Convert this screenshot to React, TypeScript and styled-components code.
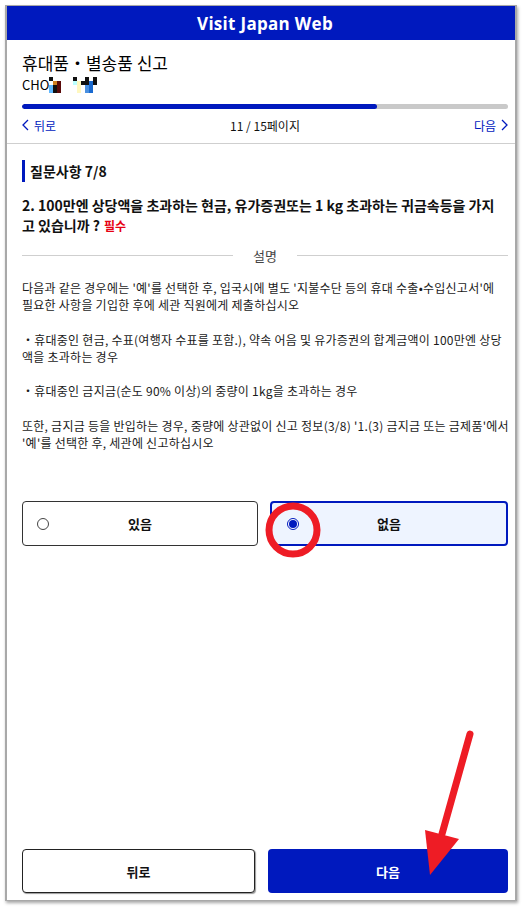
import React from 'react';
import styled, { createGlobalStyle } from 'styled-components';

const BLUE = '#0019be';

const GlobalStyle = createGlobalStyle`
  html, body {
    margin: 0;
    padding: 0;
    background: #ffffff;
  }
  body {
    font-family: "Noto Sans CJK KR", "Noto Sans", sans-serif;
    color: #111;
  }
`;

const Page = styled.div`
  position: relative;
  width: 523px;
  height: 907px;
  padding: 5px 6px 6px 5px;
  box-sizing: border-box;
`;

const Frame = styled.div`
  height: 896px;
  border: 2px solid #a8a8a8;
  border-top-width: 1px;
  border-bottom-width: 1px;
  box-shadow: 1px 2px 3px rgba(0, 0, 0, 0.35);
  display: flex;
  flex-direction: column;
  box-sizing: border-box;
  background: #fff;
`;

const Header = styled.div`
  height: 34px;
  flex-shrink: 0;
  background: ${BLUE};
  color: #fff;
  display: flex;
  align-items: center;
  justify-content: center;
  padding-left: 8px;
  font-family: "Open Sans", "Noto Sans", sans-serif;
  font-weight: 700;
  font-size: 17px;
  letter-spacing: 0.3px;
`;

const Top = styled.div`
  padding: 10px 7px 0 15px;
`;

const Title = styled.div`
  font-size: 17px;
  line-height: 25px;
  color: #000;
`;

const Name = styled.div`
  display: flex;
  align-items: center;
  font-size: 13px;
  line-height: 19px;
  height: 19px;
  color: #000;
`;

const Track = styled.div`
  margin-top: 10px;
  height: 5px;
  border-radius: 3px;
  background: #c9c9c9;
  overflow: hidden;
  display: flex;
`;

const Fill = styled.div`
  height: 100%;
  background: ${BLUE};
  border-radius: 3px;
`;

const Nav = styled.div`
  display: flex;
  align-items: center;
  justify-content: space-between;
  height: 24px;
  margin-top: 4px;
  font-size: 12px;
`;

const NavLink = styled.span`
  display: flex;
  align-items: center;
  gap: 5px;
  color: ${BLUE};
`;

const PageCount = styled.span`
  color: #111;
`;

const Rule = styled.div`
  height: 1px;
  flex-shrink: 0;
  background: #cfcfcf;
  margin-top: 6px;
`;

const Body = styled.div`
  padding: 16px 7px 0 15px;
  display: flex;
  flex-direction: column;
`;

const SectionTitle = styled.div`
  border-left: 3px solid ${BLUE};
  padding-left: 5px;
  height: 22px;
  display: flex;
  align-items: center;
  font-size: 14px;
  font-weight: 700;
  color: #111;
`;

const Question = styled.div`
  margin-top: 13px;
  font-size: 14px;
  font-weight: 700;
  line-height: 20px;
  color: #111;
`;

const Required = styled.span`
  color: #e60012;
  font-size: 12px;
  margin-left: 4px;
`;

const Divider = styled.div`
  margin-top: 10px;
  display: flex;
  align-items: center;
  gap: 20px;
  height: 19px;
  font-size: 13px;
  color: #444;
  &::before,
  &::after {
    content: '';
    flex: 1;
    height: 1px;
    background: #cfcfcf;
  }
`;

const Para = styled.p<{ gap: number }>`
  margin: 0;
  margin-top: ${(p) => p.gap}px;
  font-size: 12px;
  line-height: 17px;
  letter-spacing: 0.25px;
  color: #1a1a1a;
  white-space: nowrap;
`;

const Choices = styled.div`
  margin-top: 50px;
  display: grid;
  grid-template-columns: 236px 238px;
  justify-content: space-between;
`;

const Choice = styled.div<{ selected?: boolean }>`
  height: 45px;
  box-sizing: border-box;
  border-radius: 4px;
  border: ${(p) => (p.selected ? `2px solid ${BLUE}` : '1px solid #333')};
  background: ${(p) => (p.selected ? '#eef4ff' : '#fff')};
  display: flex;
  align-items: center;
  position: relative;
  font-size: 13px;
  font-weight: 700;
  color: #111;
`;

const Radio = styled.span<{ checked?: boolean }>`
  position: absolute;
  left: ${(p) => (p.checked ? '15px' : '14px')};
  width: 12px;
  height: 12px;
  box-sizing: border-box;
  border-radius: 50%;
  border: 1px solid ${(p) => (p.checked ? BLUE : '#444')};
  background: #fff;
  display: flex;
  align-items: center;
  justify-content: center;
  &::after {
    content: '';
    display: ${(p) => (p.checked ? 'block' : 'none')};
    width: 8px;
    height: 8px;
    border-radius: 50%;
    background: ${BLUE};
  }
`;

const ChoiceLabel = styled.span`
  flex: 1;
  text-align: center;
`;

const Spacer = styled.div`
  flex: 1;
`;

const Footer = styled.div`
  padding: 0 7px 7px 15px;
  display: grid;
  grid-template-columns: 233px 240px;
  justify-content: space-between;
`;

const FooterButton = styled.div<{ primary?: boolean }>`
  height: 44px;
  box-sizing: border-box;
  border-radius: 4px;
  display: flex;
  align-items: center;
  justify-content: center;
  font-size: 13px;
  font-weight: 700;
  background: ${(p) => (p.primary ? BLUE : '#fff')};
  color: ${(p) => (p.primary ? '#fff' : '#111')};
  border: ${(p) => (p.primary ? 'none' : '1px solid #222')};
  box-shadow: ${(p) => (p.primary ? 'none' : '1px 1px 1px rgba(0,0,0,0.4)')};
`;

const Annotations = styled.svg`
  position: absolute;
  left: 0;
  top: 0;
  pointer-events: none;
`;

const Chevron = ({ dir }: { dir: 'left' | 'right' }) => (
  <svg width="7" height="12" viewBox="0 0 7 12">
    <path
      d={dir === 'left' ? 'M6 1 L1 6 L6 11' : 'M1 1 L6 6 L1 11'}
      fill="none"
      stroke={BLUE}
      strokeWidth="1.3"
    />
  </svg>
);

const Mosaic = () => (
  <svg width="80" height="16" viewBox="0 0 80 16">
    <rect x="0" y="0" width="4" height="4" fill="#111" />
    <rect x="4" y="4" width="4" height="4" fill="#d08020" />
    <rect x="8" y="4" width="4" height="12" fill="#5a0a0a" />
    <rect x="0" y="8" width="4" height="8" fill="#60b8ff" />
    <rect x="4" y="8" width="4" height="8" fill="#111" />
    <rect x="24" y="0" width="4" height="4" fill="#111" />
    <rect x="24" y="4" width="4" height="4" fill="#bff" />
    <rect x="28" y="4" width="4" height="12" fill="#fff8c0" />
    <rect x="32" y="4" width="4" height="4" fill="#111" />
    <rect x="36" y="0" width="4" height="8" fill="#111" />
    <rect x="36" y="8" width="4" height="8" fill="#4a90e0" />
    <rect x="40" y="4" width="4" height="12" fill="#1a6ad0" />
    <rect x="44" y="0" width="4" height="8" fill="#111" />
  </svg>
);

export default function App() {
  const progress = 73;
  return (
    <>
      <GlobalStyle />
      <Page>
        <Frame>
          <Header>Visit Japan Web</Header>
          <Top>
            <Title>휴대품・별송품 신고</Title>
            <Name>
              CHO
              <Mosaic />
            </Name>
            <Track>
              <Fill style={{ width: `${progress}%` }} />
            </Track>
            <Nav>
              <NavLink>
                <Chevron dir="left" />
                뒤로
              </NavLink>
              <PageCount>11 / 15페이지</PageCount>
              <NavLink>
                다음
                <Chevron dir="right" />
              </NavLink>
            </Nav>
          </Top>
          <Rule />
          <Body>
            <SectionTitle>질문사항 7/8</SectionTitle>
            <Question>
              2. 100만엔 상당액을 초과하는 현금, 유가증권또는 1 kg 초과하는 귀금속등을 가지
              <br />고 있습니까 ?<Required>필수</Required>
            </Question>
            <Divider>설명</Divider>
            <Para gap={14}>
              다음과 같은 경우에는 '예'를 선택한 후, 입국시에 별도 '지불수단 등의 휴대 수출•수입신고서'에
              <br />
              필요한 사항을 기입한 후에 세관 직원에게 제출하십시오
            </Para>
            <Para gap={18}>
              ・휴대중인 현금, 수표(여행자 수표를 포함.), 약속 어음 및 유가증권의 합계금액이 100만엔 상당
              <br />
              액을 초과하는 경우
            </Para>
            <Para gap={17}>・휴대중인 금지금(순도 90% 이상)의 중량이 1kg을 초과하는 경우</Para>
            <Para gap={18}>
              또한, 금지금 등을 반입하는 경우, 중량에 상관없이 신고 정보(3/8) '1.(3) 금지금 또는 금제품'에서
              <br />
              '예'를 선택한 후, 세관에 신고하십시오
            </Para>
            <Choices>
              <Choice>
                <Radio />
                <ChoiceLabel>있음</ChoiceLabel>
              </Choice>
              <Choice selected>
                <Radio checked />
                <ChoiceLabel>없음</ChoiceLabel>
              </Choice>
            </Choices>
          </Body>
          <Spacer />
          <Footer>
            <FooterButton>뒤로</FooterButton>
            <FooterButton primary>다음</FooterButton>
          </Footer>
        </Frame>
        <Annotations width="523" height="907" viewBox="0 0 523 907">
          <circle cx="293" cy="530" r="24" fill="none" stroke="#ee1c25" strokeWidth="7" />
          <line x1="470" y1="734" x2="442" y2="834" stroke="#ee1c25" strokeWidth="7" strokeLinecap="round" />
          <polygon points="425,830 459,839 430,875" fill="#ee1c25" />
        </Annotations>
      </Page>
    </>
  );
}
